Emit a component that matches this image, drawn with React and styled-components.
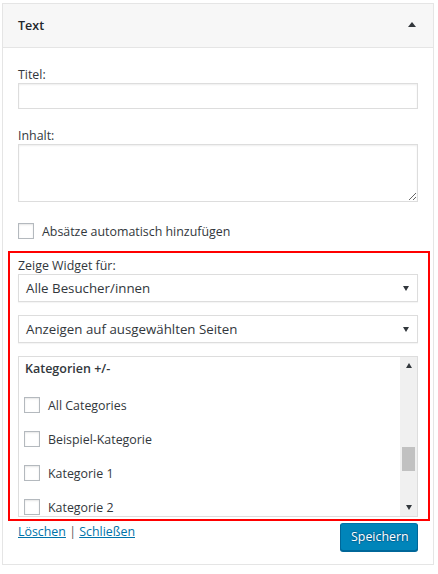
import React from "react";
import styled, { createGlobalStyle } from "styled-components";

const Global = createGlobalStyle`
  html, body { margin: 0; padding: 0; background: #fff; }
  body { font-family: "Open Sans", "Noto Sans", Arial, sans-serif; font-size: 12.4px; color: #32373c; }
  * { box-sizing: border-box; }
`;

const Panel = styled.div`
  margin: 3px 0 0 2px;
  width: 432px;
  border: 1px solid #e5e5e5;
  background: #fff;
`;

const Header = styled.div`
  height: 44px;
  background: #f7f7f7;
  border-bottom: 1px solid #e5e5e5;
  display: flex;
  align-items: center;
  justify-content: space-between;
  padding: 0 17px 0 15px;
`;

const HeaderTitle = styled.h3`
  margin: 0;
  font-size: 12.5px;
  font-weight: 600;
  color: #23282d;
`;

const Toggle = styled.span`
  width: 0;
  height: 0;
  border-left: 4px solid transparent;
  border-right: 4px solid transparent;
  border-bottom: 5px solid #32373c;
  margin-top: -2px;
`;

const Body = styled.div`
  padding: 20px 15px 13px;
`;

const Label = styled.label`
  display: block;
  line-height: 14px;
  margin-bottom: 1px;
  color: #32373c;
`;

const Field = styled.div`
  margin-top: ${(p) => p.$gap || 0}px;
`;

const TextInput = styled.input`
  display: block;
  width: 100%;
  height: 26px;
  border: 1px solid #ddd;
  box-shadow: inset 0 1px 2px rgba(0, 0, 0, 0.07);
  margin: 0;
`;

const TextArea = styled.textarea`
  display: block;
  width: 100%;
  height: 58px;
  border: 1px solid #ddd;
  box-shadow: inset 0 1px 2px rgba(0, 0, 0, 0.07);
  margin: 0;
  resize: vertical;
  font: inherit;
`;

const CheckRow = styled.label`
  display: flex;
  align-items: center;
  gap: 8px;
  margin-top: ${(p) => p.$top || 0}px;
  height: 16px;
  color: #32373c;
  flex-shrink: 0;
`;

const Box = styled.span`
  width: 16px;
  height: 16px;
  border: 1px solid #b4b9be;
  background: #fff;
  box-shadow: inset 0 1px 2px rgba(0, 0, 0, 0.1);
  flex-shrink: 0;
`;

const Highlight = styled.div`
  margin: 12px -12px 0 -10px;
  border: 2px solid #f00;
  padding: 6px 10px 2px 8px;
`;

const Select = styled.div`
  height: 28px;
  margin-top: ${(p) => p.$gap || 0}px;
  border: 1px solid #ddd;
  box-shadow: 0 1px 1px rgba(0, 0, 0, 0.04);
  display: flex;
  align-items: center;
  justify-content: space-between;
  padding: 0 8px 0 7px;
  font-size: 13.3px;
  color: #32373c;
`;

const Caret = styled.span`
  width: 0;
  height: 0;
  border-left: 3.5px solid transparent;
  border-right: 3.5px solid transparent;
  border-top: ${(p) => (p.$up ? "0" : "5px solid #32373c")};
  border-bottom: ${(p) => (p.$up ? "5px solid #32373c" : "0")};
`;

const ListBox = styled.div`
  margin-top: 13px;
  height: 161px;
  border: 1px solid #ddd;
  display: flex;
  overflow: hidden;
`;

const ListContent = styled.div`
  flex: 1;
  padding: 5px 5px 0;
  display: flex;
  flex-direction: column;
  overflow: hidden;
`;

const ListTitle = styled.div`
  font-weight: 600;
  font-size: 12.5px;
  line-height: 14px;
  padding-left: 1px;
  color: #32373c;
`;

const Track = styled.div`
  width: 17px;
  background: #f0f0f0;
  display: flex;
  flex-direction: column;
  align-items: center;
`;

const ArrowBtn = styled.div`
  height: 17px;
  width: 100%;
  display: flex;
  align-items: center;
  justify-content: center;
  flex-shrink: 0;
`;

const Thumb = styled.div`
  width: 13px;
  height: 24px;
  background: #c1c1c1;
  margin-top: ${(p) => p.$top}px;
`;

const Spacer = styled.div`
  flex: 1;
`;

const Footer = styled.div`
  display: flex;
  justify-content: space-between;
  align-items: flex-start;
  margin-top: 2px;
`;

const Links = styled.div`
  line-height: 18px;
  color: #555;
`;

const Link = styled.a`
  color: #0073aa;
  text-decoration: underline;
`;

const Button = styled.button`
  height: 28px;
  width: 78px;
  padding: 0 10px 1px;
  background: #0085ba;
  border: 1px solid;
  border-color: #0073aa #006799 #006799;
  border-radius: 3px;
  box-shadow: 0 1px 0 #006799;
  color: #fff;
  font: inherit;
  text-shadow: 0 -1px 1px #006799, 1px 0 1px #006799, 0 1px 1px #006799, -1px 0 1px #006799;
`;

const categories = ["All Categories", "Beispiel-Kategorie", "Kategorie 1", "Kategorie 2"];

export default function App() {
  return (
    <>
      <Global />
      <Panel>
        <Header>
          <HeaderTitle>Text</HeaderTitle>
          <Toggle />
        </Header>
        <Body>
          <Field>
            <Label>Titel:</Label>
            <TextInput type="text" />
          </Field>
          <Field $gap={20}>
            <Label>Inhalt:</Label>
            <TextArea />
          </Field>
          <CheckRow $top={21}>
            <Box />
            Absätze automatisch hinzufügen
          </CheckRow>
          <Highlight>
            <Label>Zeige Widget für:</Label>
            <Select>
              Alle Besucher/innen
              <Caret />
            </Select>
            <Select $gap={13}>
              Anzeigen auf ausgewählten Seiten
              <Caret />
            </Select>
            <ListBox>
              <ListContent>
                <ListTitle>Kategorien +/-</ListTitle>
                {categories.map((c, i) => (
                  <CheckRow key={c} $top={i === 0 ? 21 : 18}>
                    <Box />
                    {c}
                  </CheckRow>
                ))}
              </ListContent>
              <Track>
                <ArrowBtn>
                  <Caret $up />
                </ArrowBtn>
                <Thumb $top={73} />
                <Spacer />
                <ArrowBtn>
                  <Caret />
                </ArrowBtn>
              </Track>
            </ListBox>
          </Highlight>
          <Footer>
            <Links>
              <Link href="#">Löschen</Link> | <Link href="#">Schließen</Link>
            </Links>
            <Button>Speichern</Button>
          </Footer>
        </Body>
      </Panel>
    </>
  );
}
